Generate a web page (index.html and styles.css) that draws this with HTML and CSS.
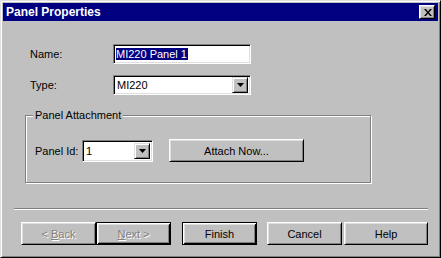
FILE: index.html
```html
<!DOCTYPE html>
<html lang="en">
<head>
  <meta charset="UTF-8" />
  <title>Panel Properties</title>
  <link rel="stylesheet" href="styles.css">
</head>
<body>
  <div class="window">
    <!-- Title bar -->
    <div class="titlebar">
      <span class="title">Panel Properties</span>
      <span class="close-btn">
        <svg width="8" height="7" viewBox="0 0 8 7"><path d="M0 0h2l2 2.4L6 0h2L5 3.5 8 7H6L4 4.6 2 7H0l3-3.5z" fill="#000"/></svg>
      </span>
    </div>

    <div class="dlg-body">
      <div class="field-row first">
        <label>Name:</label>
        <div class="edit"><span class="selected">MI220 Panel 1</span></div>
      </div>

      <div class="field-row">
        <label>Type:</label>
        <div class="combo combo-type">
          <span class="combo-value">MI220</span>
          <span class="drop-btn"><svg width="7" height="4" viewBox="0 0 7 4"><path d="M0 0h7L3.5 4z" fill="#000"/></svg></span>
        </div>
      </div>

      <!-- Group box -->
      <div class="group">
        <span class="group-title">Panel Attachment</span>
        <div class="group-row">
          <label>Panel Id:</label>
          <div class="combo combo-id">
            <span class="combo-value">1</span>
            <span class="drop-btn"><svg width="7" height="4" viewBox="0 0 7 4"><path d="M0 0h7L3.5 4z" fill="#000"/></svg></span>
          </div>
          <button class="btn attach">Attach Now...</button>
        </div>
      </div>

      <div class="separator"></div>

      <div class="buttons">
        <button class="btn disabled">&lt; <u>B</u>ack</button>
        <button class="btn btn-default disabled"><u>N</u>ext &gt;</button>
        <button class="btn btn-default finish">Finish</button>
        <button class="btn cancel">Cancel</button>
        <button class="btn help">Help</button>
      </div>
    </div>
  </div>
</body>
</html>
```
FILE: styles.css
```css
body {
  margin: 0;
  font-family: "Liberation Sans", Arial, sans-serif;
  font-size: 11px;
  color: #000;
  background-color: #c0c0c0;
}
.window {
  width: 441px;
  height: 258px;
  box-sizing: border-box;
  padding: 2px;
  background-color: #c0c0c0;
  border: 1px solid;
  border-color: #dfdfdf #000 #000 #dfdfdf;
  box-shadow: inset 1px 1px #fff, inset -1px -1px #808080;
}
.titlebar {
  height: 18px;
  background-color: #000080;
  display: flex;
  align-items: center;
  justify-content: space-between;
  padding: 0 3px 0 3px;
}
.title {
  color: #fff;
  font-weight: bold;
  font-size: 12px;
}
.close-btn {
  width: 16px;
  height: 14px;
  box-sizing: border-box;
  background-color: #c0c0c0;
  border: 1px solid;
  border-color: #fff #000 #000 #fff;
  box-shadow: inset 1px 1px #dfdfdf, inset -1px -1px #808080;
  display: flex;
  align-items: center;
  justify-content: center;
  padding-left: 1px;
}
.close-btn svg {
  display: block;
}
.dlg-body {
  padding-left: 22px;
}
.field-row {
  display: flex;
  align-items: center;
  height: 20px;
  margin: 11px 0 0 5px;
}
.field-row.first {
  margin-top: 23px;
}
.field-row label {
  width: 83px;
}
.edit, .combo {
  box-sizing: border-box;
  height: 20px;
  background-color: #fff;
  border: 1px solid;
  border-color: #808080 #fff #fff #808080;
  box-shadow: inset 1px 1px #000, inset -1px -1px #dfdfdf;
  padding: 2px;
  display: flex;
  align-items: center;
}
.edit {
  width: 138px;
}
.selected {
  background-color: #000080;
  color: #fff;
  line-height: 12px;
  padding: 0 1px 0 0;
}
.combo {
  justify-content: space-between;
}
.combo-type {
  width: 138px;
}
.combo-value {
  padding-left: 1px;
}
.drop-btn {
  width: 16px;
  height: 16px;
  box-sizing: border-box;
  background-color: #c0c0c0;
  border: 1px solid;
  border-color: #dfdfdf #000 #000 #dfdfdf;
  box-shadow: inset 1px 1px #fff, inset -1px -1px #808080;
  display: flex;
  align-items: center;
  justify-content: center;
}
.drop-btn svg {
  display: block;
}
.group {
  position: relative;
  box-sizing: border-box;
  width: 346px;
  height: 68px;
  margin-top: 20px;
  padding: 23px 0 0 9px;
  border: 1px solid #808080;
  box-shadow: inset 1px 1px #fff, 1px 1px 0 #fff;
}
.group-title {
  position: absolute;
  left: 7px;
  top: -7px;
  padding: 0 2px;
  line-height: 13px;
  background-color: #c0c0c0;
}
.group-row {
  display: flex;
  align-items: center;
  height: 23px;
}
.group-row label {
  width: 47px;
}
.combo-id {
  width: 71px;
  height: 22px;
}
.btn {
  box-sizing: border-box;
  height: 23px;
  width: 75px;
  padding: 0;
  font-family: "Liberation Sans", Arial, sans-serif;
  font-size: 11px;
  color: #000;
  background-color: #c0c0c0;
  border: 1px solid;
  border-color: #fff #000 #000 #fff;
  box-shadow: inset 1px 1px #dfdfdf, inset -1px -1px #808080;
}
.btn-default {
  border: 1px solid #000;
  box-shadow: inset 1px 1px #fff, inset -1px -1px #000, inset 2px 2px #dfdfdf, inset -2px -2px #808080;
}
.btn.disabled {
  color: #808080;
  text-shadow: 1px 1px #fff;
}
.attach {
  width: 135px;
  margin-left: 16px;
}
.separator {
  width: 414px;
  height: 0;
  margin: 25px 0 0 -11px;
  border-top: 1px solid #808080;
  border-bottom: 1px solid #fff;
}
.buttons {
  display: flex;
  margin: 12px 0 0 -4px;
}
.finish {
  margin-left: 11px;
}
.cancel {
  margin-left: 10px;
}
.help {
  width: 84px;
  margin-left: 2px;
}
```
